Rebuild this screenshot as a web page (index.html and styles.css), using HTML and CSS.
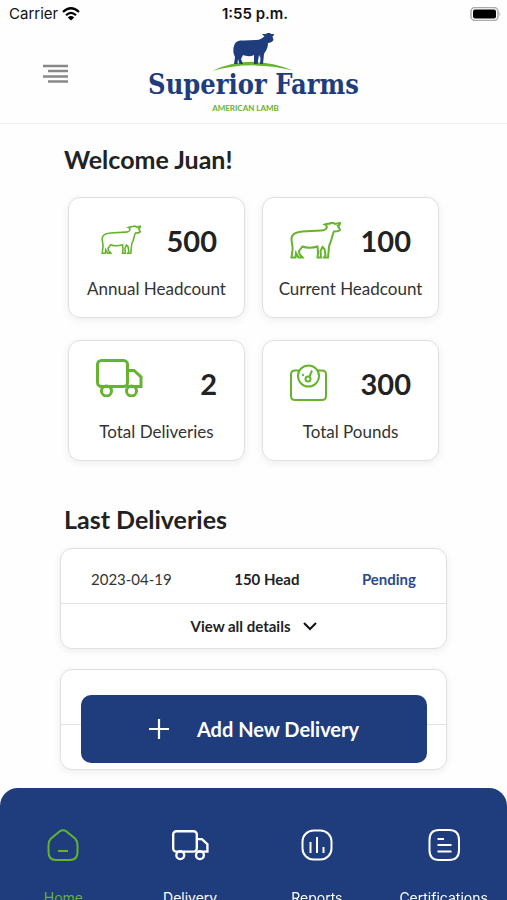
FILE: index.html
```html
<!DOCTYPE html>
<html lang="en">
<head>
    <meta charset="UTF-8">
    <meta name="viewport" content="width=device-width, initial-scale=1.0">
    <title>Superior Farms</title>
    <link rel="stylesheet" href="styles.css">
</head>
<body>
    <!-- shared shapes -->
    <svg class="symbols" aria-hidden="true">
        <symbol id="sheep" viewBox="0 0 51 37">
            <path d="M36 6 C37 5 37 3 35 2.500 C37 1.500 39 2 40 1.500 C42 .5 44 1 45 2 L50 1 C50 3 48.500 4 48 4 C49 6 50 7 50 8 C49 9.500 46 9.500 44 9.500 C42.500 12 42 16 41 19 C40 22 39 23 39 25 L38 35.500 L34 35.500 L35.500 33 L34.500 27 L32.500 25 L30.500 29 L31 35.500 L27.500 35.500 L28 31 L27.500 24.500 C23 26 16 26 12.500 24.500 L9 29 L9.500 32 L12.500 35.500 L8.500 35.500 L6 31 L5.500 35.500 L1.500 35.500 L2.500 28 C3 24 1.500 21 1.500 17 C1.500 12 6 10 12 9.500 L31 8.500 C34 8.500 37 7 37 4.500"/>
        </symbol>
        <symbol id="truck" viewBox="0 0 47 38">
            <rect x="1.500" y="1.500" width="30" height="26" rx="4"/>
            <path d="M31.500 11.500 H38 L45 18 V27.500 H31.500"/>
            <circle cx="10.500" cy="32" r="5"/>
            <circle cx="35.500" cy="32" r="5"/>
        </symbol>
    </svg>

    <div class="status-bar">
        <div class="carrier">
            <span>Carrier</span>
            <svg width="18" height="14" viewBox="0 0 18 14">
                <path d="M1 5 Q9 -2.500 17 5 M4 8.200 Q9 3.500 14 8.200" fill="none" stroke="#000" stroke-width="2.200"/>
                <path d="M9 13.500 L5.800 10.400 Q9 7.800 12.200 10.400 Z"/>
            </svg>
        </div>
        <div class="time">1:55 p.m.</div>
        <svg class="battery" width="31" height="14" viewBox="0 0 31 14">
            <rect x="1" y=".5" width="27" height="13" rx="4" fill="#fff" stroke="#aaa" stroke-width="1.500"/>
            <rect x="3" y="2.500" width="23" height="9" rx="2"/>
            <path d="M29.500 5 Q31.500 7 29.500 9 Z" fill="#aaa"/>
        </svg>
    </div>

    <header class="header">
        <button class="menu" type="button" aria-label="Menu">
            <svg width="26" height="20" viewBox="0 0 26 20">
                <path d="M0 2 H25 M5 7 H25 M0 12.500 H25 M5 17.500 H25" stroke="#888" stroke-width="2.400"/>
            </svg>
        </button>
        <div class="logo">
            <svg width="84" height="40" viewBox="0 0 84 40">
                <path class="hill" d="M1 38 Q40 20 82 37.500 Q40 27 1 38 Z"/>
                <path class="lamb" d="M23 13 C24 8 28 7 33 7.500 L45 7 C49 7 52 5 53.500 3 C52 2.500 51.500 1.500 51 1 L55 1 C57 -.5 59 -.5 60 1 L63 1 C63 2.500 62 3 61.500 3.500 L62.500 7 C61 9.500 59 9.500 57 10 C57 16 54 19 53 21 L52 31 L49 31 L49.500 25 L48 22 L46.500 31 L43 31 L43 22 C39 24 35 23 32 22 L30 26 L32 31 L28.500 31 L27 26 L26.500 31 L23 31 L24 24 C22 20 22 16 23 13 Z"/>
            </svg>
            <div class="brand">Superior Farms</div>
            <div class="tagline">AMERICAN LAMB</div>
        </div>
    </header>

    <main class="content">
        <h1>Welcome Juan!</h1>

        <section class="stats">
            <div class="stat">
                <div class="stat-top">
                    <svg class="icon small" width="40" height="30"><use href="#sheep"/></svg>
                    <strong>500</strong>
                </div>
                <span>Annual Headcount</span>
            </div>
            <div class="stat">
                <div class="stat-top">
                    <svg class="icon" width="51" height="37"><use href="#sheep"/></svg>
                    <strong>100</strong>
                </div>
                <span>Current Headcount</span>
            </div>
            <div class="stat">
                <div class="stat-top">
                    <svg class="icon bold raised" width="47" height="38"><use href="#truck"/></svg>
                    <strong>2</strong>
                </div>
                <span>Total Deliveries</span>
            </div>
            <div class="stat">
                <div class="stat-top">
                    <svg class="icon" width="37" height="38" viewBox="0 0 37 38">
                        <path d="M9 6.500 H5 Q1 6.500 1 10.500 V32 Q1 36 5 36 H32 Q36 36 36 32 V10.500 Q36 6.500 32 6.500 H28"/>
                        <circle cx="18.500" cy="12" r="10.500"/>
                        <circle cx="18" cy="15" r="2.500"/>
                        <path d="M19.500 12.500 L22 6.500 M12.500 12 L13.500 10"/>
                    </svg>
                    <strong>300</strong>
                </div>
                <span>Total Pounds</span>
            </div>
        </section>

        <h2>Last Deliveries</h2>

        <section class="deliveries">
            <article class="delivery">
                <div class="delivery-row">
                    <time>2023-04-19</time>
                    <b>150 Head</b>
                    <b class="status">Pending</b>
                </div>
                <button class="details" type="button">
                    View all details
                    <svg width="14" height="9" viewBox="0 0 14 9">
                        <path d="M1 1 L7 7 L13 1" fill="none" stroke="#111" stroke-width="2"/>
                    </svg>
                </button>
            </article>
            <article class="delivery">
                <div class="delivery-row"></div>
                <button class="details" type="button" aria-label="Details"></button>
            </article>
        </section>
    </main>

    <button class="add-delivery" type="button">
        <svg width="20" height="20" viewBox="0 0 20 20">
            <path d="M10 0 V20 M0 10 H20" stroke="#fff" stroke-width="2.200"/>
        </svg>
        Add New Delivery
    </button>

    <nav class="tabs">
        <a class="active" href="#home">
            <svg width="32" height="32" viewBox="0 0 32 32">
                <path d="M12.500 2.500 Q16 0 19.500 2.500 L28 9.500 Q30.500 12 30.500 16 V23 Q30.500 31 23 31 H9 Q1.500 31 1.500 23 V16 Q1.500 12 4 9.500 Z M11 22 H21"/>
            </svg>
            Home
        </a>
        <a href="#delivery">
            <svg class="bold" width="37" height="32"><use href="#truck"/></svg>
            Delivery
        </a>
        <a href="#reports">
            <svg width="32" height="32" viewBox="0 0 32 32">
                <rect x="1.500" y="1.500" width="29" height="29" rx="11"/>
                <path d="M9.500 13 V24 M16 8 V24 M22.500 18 V24"/>
            </svg>
            Reports
        </a>
        <a href="#certifications">
            <svg width="32" height="32" viewBox="0 0 32 32">
                <path d="M11 1 H21 Q31 1 31 11 V21 Q31 31 21 31 H11 Q1.500 31 1.500 21 V11 Q1.500 1 11 1 Z M9.500 10 H16 M9.500 16 H23.500 M9.500 22.500 H23.500"/>
            </svg>
            Certifications
        </a>
    </nav>
</body>
</html>
```

FILE: styles.css
```css
* {
    box-sizing: border-box;
}

body {
    margin: 0;
    height: 100vh;
    overflow: hidden;
    background-color: #fefefe;
    color: #222;
    font-family: Lato, sans-serif;
}

button {
    font-family: inherit;
    border: none;
    background: none;
    padding: 0;
    cursor: pointer;
}

.symbols {
    display: none;
}

/* status bar */
.status-bar {
    display: grid;
    grid-template-columns: 1fr auto 1fr;
    align-items: center;
    height: 27px;
    padding: 0 6px 0 9px;
    color: #111;
    font-family: Inter, sans-serif;
    font-size: 15px;
}

.carrier {
    display: flex;
    align-items: center;
    gap: 4px;
}

.time {
    font-weight: 600;
}

.battery {
    justify-self: end;
}

/* header */
.header {
    display: grid;
    grid-template-columns: 1fr auto 1fr;
    height: 97px;
    padding: 6px 43px 0;
    border-bottom: 1px solid #f0f0f0;
}

.menu {
    justify-self: start;
    align-self: start;
    margin-top: 31px;
}

.logo {
    display: flex;
    flex-direction: column;
    align-items: center;
    color: #1f3d7c;
}

.hill {
    fill: #65b32e;
}

.lamb {
    fill: #1f3d7c;
}

.brand {
    font-family: "DejaVu Serif Condensed", "DejaVu Serif", serif;
    font-size: 27px;
    font-weight: bold;
    line-height: 24px;
}

.tagline {
    margin-top: 5px;
    padding-right: 16px;
    color: #65b32e;
    font-size: 8px;
    font-weight: bold;
    line-height: 12px;
}

/* content */
.content {
    padding: 19px 60px 0;
}

h1,
h2 {
    margin: 0;
    padding: 0 4px;
    font-size: 25px;
    font-weight: bold;
    line-height: 32px;
}

.stats {
    display: grid;
    grid-template-columns: 1fr 1fr;
    gap: 22px 17px;
    margin: 22px 8px 42px;
}

.stat,
.delivery {
    background-color: #fff;
    border: 1px solid #e0e0e0;
    border-radius: 12px;
    box-shadow: 0 2px 8px rgba(0, 0, 0, 0.07);
}

.stat {
    height: 121px;
    padding: 19px 27px 0;
    text-align: center;
}

.stat-top {
    display: flex;
    justify-content: space-between;
    align-items: center;
    height: 46px;
}

.stat-top strong {
    font-size: 29px;
}

.stat span {
    display: block;
    margin: 12px -27px 0;
    font-size: 17px;
    line-height: 28px;
    color: #333;
}

.icon {
    fill: none;
    stroke: #65b32e;
    stroke-width: 2;
}

.icon.small {
    margin-left: 5px;
}

.raised {
    margin-bottom: 10px;
}

.bold {
    stroke-width: 3;
}

/* deliveries */
.deliveries {
    display: grid;
    gap: 20px;
    margin-top: 13px;
}

.delivery-row {
    display: flex;
    justify-content: space-between;
    align-items: center;
    height: 55px;
    padding: 5px 30px 0;
    font-size: 15px;
    border-bottom: 1px solid #e0e0e0;
}

.delivery time {
    color: #333;
}

.delivery .status {
    color: #2b4a8c;
}

.details {
    display: flex;
    justify-content: center;
    align-items: center;
    gap: 12px;
    width: 100%;
    height: 44px;
    color: #222;
    font-size: 15px;
    font-weight: bold;
}

.add-delivery {
    position: fixed;
    right: 80px;
    bottom: 137px;
    left: 81px;
    display: flex;
    justify-content: center;
    align-items: center;
    gap: 28px;
    height: 68px;
    border-radius: 10px;
    background-color: #1f3d7c;
    color: #fff;
    font-size: 20px;
    font-weight: bold;
}

/* bottom tabs */
.tabs {
    position: fixed;
    right: 0;
    bottom: 0;
    left: 0;
    display: grid;
    grid-template-columns: repeat(4, 1fr);
    height: 112px;
    padding-top: 41px;
    overflow: hidden;
    border-radius: 18px 18px 0 0;
    background-color: #1f3d7c;
}

.tabs a {
    display: flex;
    flex-direction: column;
    align-items: center;
    gap: 27px;
    color: #fff;
    font-family: Inter, sans-serif;
    font-size: 14px;
    line-height: 20px;
    text-decoration: none;
}

.tabs svg {
    flex-shrink: 0;
    fill: none;
    stroke: currentColor;
    stroke-width: 2;
}

.tabs .bold {
    stroke-width: 3;
}

.tabs .active {
    color: #65b32e;
}
```
